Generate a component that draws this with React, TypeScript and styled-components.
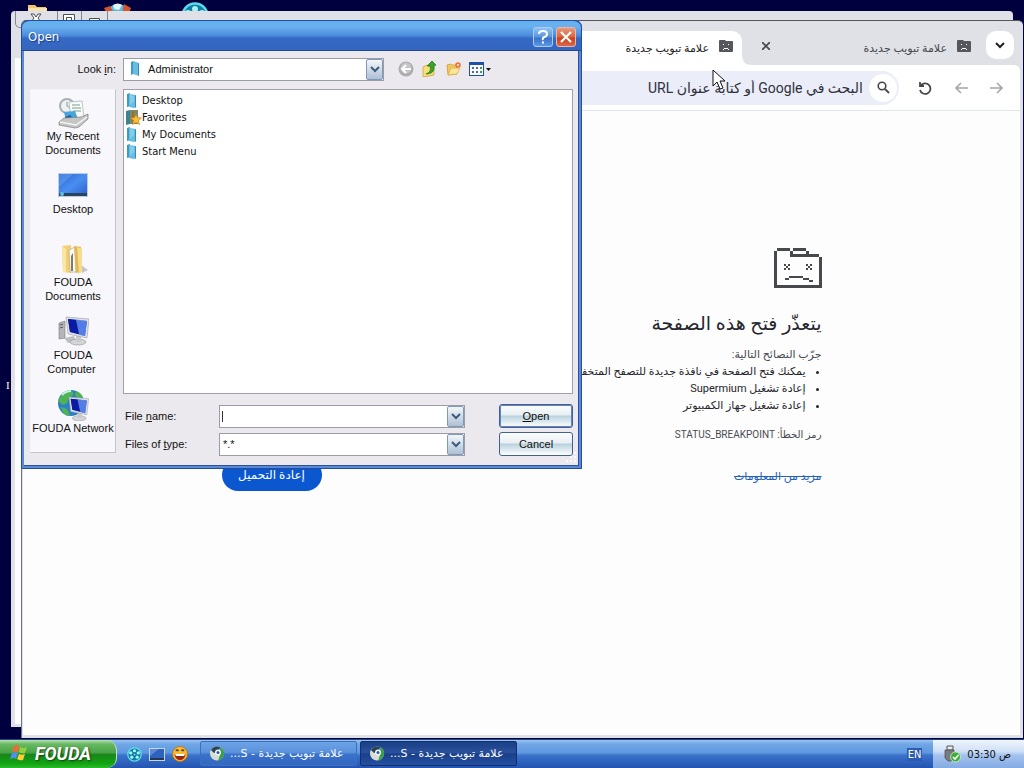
import React from 'react';
import styled, { createGlobalStyle } from 'styled-components';

const tahoma = '"DejaVu Sans Condensed", "DejaVu Sans", sans-serif';
const arabic = 'Roboto, "DejaVu Sans", sans-serif';
const arial = '"Liberation Sans", "DejaVu Sans Condensed", "DejaVu Sans", sans-serif';

const GlobalStyle = createGlobalStyle`
  * { box-sizing: border-box; }
  body { margin: 0; overflow: hidden; font-family: ${arial}; font-size: 11px; color: #111; }
  button, input, select { font: inherit; color: inherit; margin: 0; }
  svg { display: block; flex: none; }
`;

const Screen = styled.div`
  display: flex;
  flex-direction: column;
  height: 100vh;
`;

const Desktop = styled.div`
  position: relative;
  flex: 1;
  min-height: 0;
  background: #00003e;
  overflow: hidden;
`;

const DesktopIcon = styled.div<{ $left: number; $top: number }>`
  position: absolute;
  left: ${p => p.$left}px;
  top: ${p => p.$top}px;
`;

const IconCaption = styled.span`
  position: absolute;
  left: 6px;
  top: 379px;
  color: #fff;
  font-family: "Liberation Serif", serif;
`;

/* Window behind the active one */
const BackWindow = styled.div`
  position: absolute;
  left: 11px;
  top: 11px;
  right: 11px;
  bottom: 12px;
  padding: 0 4px 3px;
  display: flex;
  flex-direction: column;
  background: #dfe1e7;
  border-radius: 4px 4px 0 0;
`;

const CaptionButtons = styled.div`
  display: flex;
  height: 17px;
  width: 93px;
  margin-bottom: 30px;
  border: 1px solid #85868e;
  border-top: 0;
  border-radius: 0 0 5px 5px;
`;

const CaptionButton = styled.button<{ $width: number }>`
  display: flex;
  align-items: flex-start;
  justify-content: center;
  width: ${p => p.$width}px;
  padding: 2px 0 0;
  border: 0;
  border-right: 1px solid #85868e;
  background: none;
  &:last-child { border-right: 0; }
`;

const BackPage = styled.div`
  flex: 1;
  background: #fdfdfe;
`;

/* Browser window */
const Browser = styled.div`
  position: absolute;
  left: 21px;
  top: 20px;
  right: 1px;
  bottom: 1px;
  display: flex;
  flex-direction: column;
  padding: 0 3px 3px 1px;
  background: #dfe1e7;
  border-top: 1px solid #55565e;
  border-left: 1px solid #6d7684;
  border-radius: 5px 5px 0 0;
  font-family: ${arabic};
`;

const TabStrip = styled.div`
  display: flex;
  height: 44px;
  padding: 10px 6px 0 0;
`;

const TabMenu = styled.button`
  display: flex;
  align-items: center;
  justify-content: center;
  width: 28px;
  height: 28px;
  padding: 0;
  border: 0;
  border-radius: 10px;
  background: #fff;
`;

const Tab = styled.div<{ $active?: boolean }>`
  position: relative;
  display: flex;
  align-items: center;
  gap: 10px;
  width: 226px;
  height: 34px;
  padding: 0 9px 5px 0;
  margin-right: ${p => (p.$active ? 12 : 6)}px;
  border-radius: 10px 10px 0 0;
  background: ${p => (p.$active ? '#fff' : 'transparent')};
  color: ${p => (p.$active ? '#222' : '#44474c')};
  font-size: 11px;
`;

const TabFoot = styled.svg`
  position: absolute;
  right: -10px;
  bottom: 0;
`;

const TabTitle = styled.span`
  flex: 1;
  padding-top: 5px;
  white-space: nowrap;
`;

const PlainButton = styled.button`
  display: flex;
  align-items: center;
  justify-content: center;
  width: 24px;
  height: 24px;
  padding: 0;
  border: 0;
  background: none;
`;

const Toolbar = styled.div`
  display: flex;
  align-items: center;
  gap: 12px;
  height: 46px;
  padding: 0 11px 0 8px;
  background: #fff;
  border-radius: 0 6px 0 0;
  border-bottom: 1px solid #e2e5ea;
`;

const Omnibox = styled.label`
  display: flex;
  align-items: center;
  gap: 6px;
  flex: 1;
  height: 34px;
  padding: 0 2px;
  margin-right: 2px;
  border-radius: 17px;
  background: #ebedf8;
`;

const SearchBadge = styled.span`
  display: flex;
  align-items: center;
  justify-content: center;
  width: 28px;
  height: 28px;
  border-radius: 14px;
  background: #fff;
`;

const OmniInput = styled.input`
  flex: 1;
  min-width: 0;
  padding: 0;
  border: 0;
  outline: 0;
  background: none;
  font-size: 14px;
  &::placeholder { color: #30313c; opacity: 1; }
`;

const Page = styled.main`
  flex: 1;
  min-height: 0;
  overflow: hidden;
  background: #fdfdfe;
`;

const ErrorContent = styled.section`
  max-width: 600px;
  margin: 0 auto;
  padding-top: 137px;
  color: #484a50;
  font-size: 11px;
  line-height: 17px;
`;

const ErrorTitle = styled.h1`
  margin: 22px 0 9px;
  color: #25262b;
  font-size: 19px;
  font-weight: 400;
  line-height: 28px;
`;

const Paragraph = styled.p`
  margin: 0;
  line-height: 16px;
`;

const Tips = styled.ul`
  margin: 0 0 12px;
  padding: 0 16px 0 0;
  color: #25262b;
  white-space: nowrap;
`;

const ErrorCode = styled.p`
  margin: 0;
  font-size: 10px;
`;

const ErrorFooter = styled.div`
  display: flex;
  align-items: center;
  justify-content: space-between;
  margin-top: 16px;
`;

const MoreLink = styled.a`
  padding-top: 2px;
  color: #2460bd;
  font-size: 11px;
  text-decoration: line-through;
`;

const ReloadButton = styled.button`
  width: 100px;
  height: 32px;
  padding: 0;
  border: 0;
  border-radius: 16px;
  background: #0b57d0;
  color: #fff;
  font-size: 12px;
`;

/* Open dialog */
const Dialog = styled.div`
  position: absolute;
  left: 21px;
  top: 20px;
  width: 561px;
  border: 3px solid #5b89d5;
  border-top: 0;
  border-radius: 7px 7px 0 0;
  outline: 1px solid #254d9d;
  outline-offset: -1px;
  background: #ebe9ed;
`;

const TitleBar = styled.div`
  display: flex;
  align-items: center;
  gap: 3px;
  height: 31px;
  margin: 0 -2px;
  padding: 2px 5px 0 6px;
  border-top: 1px solid #193c7c;
  border-bottom: 1px solid #1f4a9c;
  border-radius: 7px 7px 0 0;
  background: linear-gradient(#62b1f0, #6bb0ef 20%, #4b8cdb 50%, #3469c4 60%, #3566bf);
`;

const DialogTitle = styled.h2`
  flex: 1;
  margin: 0;
  color: #fff;
  font: 400 13px ${tahoma};
  text-shadow: 1px 1px 1px #1c3f86;
`;

const TitleButton = styled.button<{ $danger?: boolean }>`
  display: flex;
  align-items: center;
  justify-content: center;
  width: 20px;
  height: 20px;
  padding: 0;
  border: 1px solid ${p => (p.$danger ? '#f0b5a8' : '#a9cdf5')};
  border-radius: 3px;
  background: ${p => (p.$danger
    ? 'linear-gradient(#e59a80, #d8653f 50%, #c9401c 55%, #dc6a48)'
    : 'linear-gradient(#8fc1f3, #5c94dd 50%, #3a70c8 55%, #5b98e2)')};
`;

const DialogBody = styled.form`
  display: grid;
  grid-template-columns: 86px 1fr;
  column-gap: 7px;
  row-gap: 8px;
  padding: 6px 5px 9px 6px;
  border: solid #2e5299;
  border-width: 0 1px 1px 0;
`;

const LookLabel = styled.label`
  align-self: center;
  text-align: right;
`;

const LookRow = styled.div`
  display: flex;
  align-items: center;
  height: 24px;
`;

const Combo = styled.div<{ $width: number }>`
  display: flex;
  align-items: center;
  position: relative;
  width: ${p => p.$width}px;
  height: 23px;
  border: 1px solid #9a9ca8;
  background: #fff;
`;

const ComboSelect = styled.select`
  appearance: none;
  flex: 1;
  min-width: 0;
  height: 21px;
  padding: 0 3px;
  border: 0;
  outline: 0;
  background: none;
`;

const ComboInput = styled.input`
  flex: 1;
  min-width: 0;
  height: 21px;
  padding: 0 3px;
  border: 0;
  outline: 0;
  background: none;
`;

const ComboArrow = styled.span`
  display: flex;
  align-items: center;
  justify-content: center;
  width: 17px;
  height: 21px;
  border: 1px solid #8199b8;
  border-radius: 2px;
  background: linear-gradient(#f3f6f9, #d3dfe9 45%, #adc0d4);
  pointer-events: none;
`;

const Caret = styled.span`
  width: 1px;
  height: 11px;
  margin-left: 2px;
  background: #333;
`;

const ToolIcons = styled.div`
  display: flex;
  align-items: center;
  margin-left: 10px;
`;

const Places = styled.nav`
  height: 364px;
  background: #f8f7fb;
  border: 1px solid #f4f3f7;
  border-right-color: #c5c4ca;
  border-bottom-color: #c5c4ca;
`;

const Place = styled.button`
  display: flex;
  flex-direction: column;
  align-items: center;
  width: 100%;
  height: 73px;
  padding: 7px 0 0;
  border: 0;
  background: none;
  line-height: 14px;
  white-space: pre;
`;

const MainColumn = styled.div`
  display: flex;
  flex-direction: column;
  gap: 10px;
`;

const FileList = styled.ul`
  height: 305px;
  margin: 0;
  padding: 2px;
  border: 1px solid #a0a1ab;
  background: #fff;
  list-style: none;
  font-family: ${tahoma};
`;

const FileRow = styled.li`
  display: flex;
  align-items: center;
  height: 17px;
`;

const Fields = styled.div`
  display: grid;
  grid-template-columns: 94px 1fr 74px;
  align-items: center;
  row-gap: 4px;
  padding: 0 0 0 2px;
`;

const DialogButton = styled.button<{ $primary?: boolean }>`
  height: 24px;
  padding: 0;
  border: 1px solid #45608f;
  border-radius: 3px;
  background: linear-gradient(#fbfdfd, #e9eff3 45%, #b9d2dd 50%, #e2edf2 80%, #fff);
  box-shadow: ${p => (p.$primary ? 'inset 0 0 0 1px #6183c6' : 'none')};
`;

const Grip = styled.svg`
  position: absolute;
  right: 2px;
  bottom: 3px;
`;

const Pointer = styled.svg`
  position: absolute;
  left: 712px;
  top: 69px;
`;

/* Taskbar */
const Taskbar = styled.footer`
  display: flex;
  align-items: stretch;
  height: 29px;
  border-top: 1px solid #1e4685;
  background: linear-gradient(#9bc3f0, #70a6e6 15%, #5e98df 45%, #3a72ca 55%, #2454b0);
  color: #fff;
  font-family: ${tahoma};
`;

const StartButton = styled.button`
  display: flex;
  align-items: center;
  gap: 7px;
  width: 117px;
  padding: 0 0 2px 10px;
  border: 0;
  border-right: 1px solid #c0e6bc;
  border-radius: 0 10px 10px 0;
  background: linear-gradient(#b5e0ae, #67b862 15%, #4aa348 45%, #18861a 52%, #12a512 85%, #2bbb2b);
  color: #fff;
  font: italic 700 18px Roboto, "Liberation Sans", sans-serif;
  text-shadow: 1px 1px 2px #143f14;
`;

const QuickLaunch = styled.div`
  display: flex;
  align-items: center;
  gap: 7px;
  width: 83px;
  padding-left: 10px;
`;

const TaskButton = styled.button<{ $active?: boolean }>`
  display: flex;
  align-items: center;
  gap: 5px;
  width: 157px;
  height: 25px;
  margin: 1px 3px 0 0;
  padding: 0 8px 0 9px;
  border: 1px solid ${p => (p.$active ? '#12306f' : '#3b6fc0')};
  border-radius: 2px;
  background: ${p => (p.$active
    ? 'linear-gradient(#1a3f85, #2a519d 45%, #1b3f88 52%, #2350a3)'
    : 'linear-gradient(#6da2e6, #5a92dc 45%, #3a71c9 55%, #3468c2)')};
  font-family: "DejaVu Sans", sans-serif;
  font-size: 11px;
  white-space: nowrap;
`;

const Language = styled.span`
  align-self: center;
  margin: 0 11px 0 auto;
  padding: 0 1px;
  background: #2d5bb0;
`;

const Tray = styled.div`
  display: flex;
  align-items: center;
  gap: 6px;
  padding: 0 13px 0 11px;
  background: linear-gradient(#eef5fd, #cfe0f7 40%, #a3c2ee 55%, #84abe4);
  color: #111;
`;

function Chevron({ color = '#3f5a7c' }: { color?: string }) {
  return (
    <svg width="10" height="8" viewBox="0 0 10 8">
      <path d="M1 2l4 4 4-4" fill="none" stroke={color} strokeWidth="2" />
    </svg>
  );
}

function SadFolder() {
  return (
    <svg width="14" height="12" viewBox="0 0 14 12">
      <path d="M1 0h5l1 1h6q1 0 1 1v9q0 1-1 1H1q-1 0-1-1V1q0-1 1-1z" fill="#55575c" />
      <path d="M4 4h1v1H4zM9 4h1v1H9zM4 9h1V8h4v1h1v1H9V9H5v1H4z" fill="#fff" />
    </svg>
  );
}

function BlueFolder() {
  return (
    <svg width="16" height="16" viewBox="0 0 16 16">
      <path d="M1 1l3-1v13l-3 1z" fill="#3a9bc4" />
      <path d="M3 1l7 1v12l-2 1-5-1z" fill="#67bce0" />
      <path d="M4 2l4 1v5l-4 4z" fill="#9bd8ef" opacity=".6" />
      <path d="M9 3l1-1v12l-1 1z" fill="#2f8dbb" />
    </svg>
  );
}

function FavoritesIcon() {
  return (
    <svg width="16" height="16" viewBox="0 0 16 16">
      <path d="M0 1l4-1v14l-4 1z" fill="#3d8392" />
      <path d="M4 0h8v14H4z" fill="#7a8a6a" />
      <path d="M6 1h2v13H6z" fill="#a9682e" />
      <path d="M10 4l1.500 3.500 4 .5-3 2.500 1 4-3.500-2-3.500 2 1-4-3-2.500 4-.5z" fill="#fbbf35" stroke="#b9770e" strokeWidth=".6" />
    </svg>
  );
}

function RecentIcon() {
  return (
    <svg width="32" height="32" viewBox="0 0 32 32">
      <circle cx="10" cy="9" r="7" fill="#eef2f3" stroke="#a7b0b3" strokeWidth="2" />
      <path d="M10 5v4l3 2" fill="none" stroke="#8a979c" />
      <path d="M12 5l13-1 2 17-13 1z" fill="#fafcfb" stroke="#a3adae" strokeWidth=".7" />
      <path d="M15 8h8M15 11h9M16 14h8" stroke="#7a9a8c" />
      <path d="M7 15l11-1 3 8-12 2z" fill="#47a5dd" />
      <path d="M8 20l5-2 4 4-8 2z" fill="#1f5f98" />
      <path d="M2 25l5-4 17-1 7-3v5l-9 8-4 1-16-3z" fill="#c3c6c3" stroke="#7d807e" strokeWidth=".7" />
      <path d="M3 25l16 3 11-8" fill="none" stroke="#f5f5f5" strokeWidth="1.500" />
    </svg>
  );
}

function DesktopPlaceIcon() {
  return (
    <svg width="32" height="32" viewBox="0 0 32 32">
      <defs>
        <linearGradient id="deskScreen" x1="0" y1="0" x2="1" y2="1">
          <stop offset="0" stopColor="#2b66cf" /><stop offset=".5" stopColor="#4a8ef0" /><stop offset="1" stopColor="#2c5fd0" />
        </linearGradient>
      </defs>
      <path d="M1 3h30v24H1z" fill="#b9cbe5" />
      <path d="M2 4h28v22H2z" fill="url(#deskScreen)" />
      <path d="M2 4h14L2 17z" fill="#86b6f5" opacity=".35" />
      <path d="M2 23h28v3H2z" fill="#27445d" />
      <circle cx="5" cy="24" r="2" fill="#5fc0da" />
    </svg>
  );
}

function DocumentsIcon() {
  return (
    <svg width="32" height="32" viewBox="0 0 32 32">
      <path d="M24 22l7 5-6 3z" fill="#c6c6c8" />
      <path d="M5 3l9-1v28l-8-1z" fill="#f2cf70" />
      <path d="M5 3l4 3v23l-3 0z" fill="#fae6a4" />
      <path d="M12 7l6-3 1 25h-6z" fill="#f7f7f4" stroke="#a29a83" strokeWidth=".6" />
      <path d="M14 13l2-3v18h-2z" fill="#837b6a" />
      <path d="M17 3l7 1 1 25-6 1z" fill="#e4b950" />
      <path d="M20 4l5 2v23l-3 1z" fill="#f7dc8d" />
    </svg>
  );
}

function Monitor({ x = 0, y = 0, scale = 1 }: { x?: number; y?: number; scale?: number }) {
  return (
    <g transform={`translate(${x} ${y}) scale(${scale})`}>
      <ellipse cx="12" cy="25" rx="8" ry="3" fill="#d5d6d8" stroke="#8f9194" strokeWidth=".6" />
      <path d="M10 19h5v6h-5z" fill="#c9cacd" />
      <path d="M0 0l23 2-2 19L2 17z" fill="#dfe1e4" stroke="#9a9ca0" strokeWidth=".6" />
      <path d="M2 2l19 2-2 15L4 15z" fill="#1632c2" />
      <path d="M8 2l13 2-2 15-6-1z" fill="#6c9cf2" opacity=".7" />
      <path d="M2 2l8 1 3 14-9-2z" fill="#0b1aa0" />
    </g>
  );
}

function ComputerIcon() {
  return (
    <svg width="32" height="32" viewBox="0 0 32 32">
      <path d="M2 7l6-2v17l-6 1z" fill="#b3b5b7" stroke="#797b7d" strokeWidth=".6" />
      <path d="M3 9l3-1M3 12l3-1" stroke="#57595b" />
      <path d="M7 22l10-2 2 5-8 2z" fill="#bec0c2" />
      <Monitor x={9} y={1} />
    </svg>
  );
}

function NetworkIcon() {
  return (
    <svg width="32" height="32" viewBox="0 0 32 32">
      <circle cx="14" cy="14" r="13" fill="#2b81c4" />
      <path d="M3 8q5-7 11-7l3 4-5 4-2 5-4 2-5-4zM4 18l6 2 3 6-3 1q-5-3-6-9zM19 2q6 2 7 7l-5 1-3-4z" fill="#51b252" />
      <path d="M5 6q4-4 9-4" stroke="#c6efe6" strokeWidth="2" fill="none" />
      <Monitor x={12} y={8} scale={0.85} />
    </svg>
  );
}

function BrowserMark({ size = 15 }: { size?: number }) {
  return (
    <svg width={size} height={size} viewBox="0 0 15 15">
      <circle cx="7" cy="7.500" r="7" fill="#d9ded4" />
      <path d="M1 4q3-5 9-3l-1 4-5 2z" fill="#2b4154" />
      <path d="M10 1q5 3 4 8-2 5-6 6l2-6z" fill="#3c9d4c" />
      <circle cx="8" cy="6.500" r="3" fill="#eef5fc" /><circle cx="8" cy="6.500" r="1.500" fill="#295ca0" />
    </svg>
  );
}

function ReelIcon({ size }: { size: number }) {
  return (
    <svg width={size} height={size} viewBox="0 0 28 28">
      <circle cx="14" cy="14" r="12.500" fill="#0d7ea3" stroke="#5edbea" strokeWidth="2.500" />
      <g fill="#a9f2f8">
        <circle cx="14" cy="7" r="3" /><circle cx="7" cy="11" r="3" /><circle cx="21" cy="11" r="3" />
        <circle cx="9" cy="19" r="3" /><circle cx="19" cy="19" r="3" /><circle cx="14" cy="14" r="1.500" />
      </g>
    </svg>
  );
}

const places = [
  { label: 'My Recent\nDocuments', icon: <RecentIcon /> },
  { label: 'Desktop', icon: <DesktopPlaceIcon /> },
  { label: 'FOUDA\nDocuments', icon: <DocumentsIcon /> },
  { label: 'FOUDA\nComputer ', icon: <ComputerIcon /> },
  { label: 'FOUDA Network', icon: <NetworkIcon /> },
];

const files = ['Desktop', 'Favorites', 'My Documents', 'Start Menu'];

function BrowserWindow() {
  return (
    <Browser dir="rtl">
      <TabStrip>
        <TabMenu aria-label="Search tabs"><Chevron color="#222" /></TabMenu>
        <Tab>
          <SadFolder />
          <TabTitle>علامة تبويب جديدة</TabTitle>
          <PlainButton aria-label="Close tab">
            <svg width="8" height="8" viewBox="0 0 8 8"><path d="M0 0l8 8M8 0L0 8" stroke="#44464a" strokeWidth="1.600" /></svg>
          </PlainButton>
        </Tab>
        <Tab $active>
          <SadFolder />
          <TabTitle>علامة تبويب جديدة</TabTitle>
          <TabFoot width="10" height="10" viewBox="0 0 10 10"><path d="M0 0q0 10 10 10H0z" fill="#fff" /></TabFoot>
        </Tab>
      </TabStrip>
      <Toolbar>
        <PlainButton aria-label="Back">
          <svg width="14" height="12" viewBox="0 0 14 12"><path d="M0 6h12M7 1l5 5-5 5" fill="none" stroke="#a3a5a8" strokeWidth="1.600" /></svg>
        </PlainButton>
        <PlainButton aria-label="Forward">
          <svg width="14" height="12" viewBox="0 0 14 12"><path d="M14 6H2M7 1L2 6l5 5" fill="none" stroke="#a3a5a8" strokeWidth="1.600" /></svg>
        </PlainButton>
        <PlainButton aria-label="Reload">
          <svg width="14" height="14" viewBox="0 0 14 14"><path d="M2 1v4h4M2.500 5A5.300 5.300 0 1 1 2 9" fill="none" stroke="#45474b" strokeWidth="1.800" /></svg>
        </PlainButton>
        <Omnibox>
          <SearchBadge>
            <svg width="13" height="13" viewBox="0 0 13 13"><circle cx="5" cy="5" r="3.800" fill="none" stroke="#45474b" strokeWidth="1.600" /><path d="M8 8l4 4" stroke="#45474b" strokeWidth="1.800" /></svg>
          </SearchBadge>
          <OmniInput aria-label="العنوان" placeholder="البحث في Google أو كتابة عنوان URL" />
        </Omnibox>
      </Toolbar>
      <Page>
        <ErrorContent>
          <svg width="48" height="40" viewBox="0 0 48 40" shapeRendering="crispEdges">
            <path
              d="M3 0h13v3h3V0h13v3h3v3h10v3h3v31H0V3h3zM3 3v34h42V9H16V3zM19 3v3h13V3z"
              fill="#48494d"
              fillRule="evenodd"
            />
            <path
              d="M10 16h2v2h-2zM14 16h2v2h-2zM12 18h2v2h-2zM10 20h2v2h-2zM14 20h2v2h-2zM32 16h2v2h-2zM36 16h2v2h-2zM34 18h2v2h-2zM32 20h2v2h-2zM36 20h2v2h-2zM15 28h14v2H15zM11 30h4v2h-4zM29 30h6v2h-6zM35 32h4v2h-4z"
              fill="#48494d"
            />
          </svg>
          <ErrorTitle>يتعذّر فتح هذه الصفحة</ErrorTitle>
          <Paragraph>جرّب النصائح التالية:</Paragraph>
          <Tips>
            <li>يمكنك فتح الصفحة في نافذة جديدة للتصفح المتخفي</li>
            <li>إعادة تشغيل Supermium</li>
            <li>إعادة تشغيل جهاز الكمبيوتر</li>
          </Tips>
          <ErrorCode>رمز الخطأ: STATUS_BREAKPOINT</ErrorCode>
          <ErrorFooter>
            <MoreLink href="#info">مزيد من المعلومات</MoreLink>
            <ReloadButton>إعادة التحميل</ReloadButton>
          </ErrorFooter>
        </ErrorContent>
      </Page>
    </Browser>
  );
}

function OpenDialog() {
  return (
    <Dialog role="dialog" aria-labelledby="dialog-title">
      <TitleBar>
        <DialogTitle id="dialog-title">Open</DialogTitle>
        <TitleButton aria-label="Help">
          <svg width="12" height="14" viewBox="0 0 12 14"><path d="M2 4q0-3 4-3t4 3q0 2-2.500 3T6 10M6 11.500v2" fill="none" stroke="#fff" strokeWidth="2" /></svg>
        </TitleButton>
        <TitleButton $danger aria-label="Close">
          <svg width="12" height="12" viewBox="0 0 12 12"><path d="M1 1l10 10M11 1L1 11" stroke="#fff" strokeWidth="2.200" /></svg>
        </TitleButton>
      </TitleBar>
      <DialogBody onSubmit={e => e.preventDefault()}>
        <LookLabel htmlFor="look-in">Look <u>i</u>n:</LookLabel>
        <LookRow>
          <Combo $width={261}>
            <svg width="18" height="16" viewBox="-6 0 18 16"><path d="M1 1l2-1v13l-2 1z" fill="#3a9bc4" /><path d="M3 0l6 2v13l-6-2z" fill="#67bce0" /><path d="M8 3l1-1v13l-1-1z" fill="#2f8dbb" /></svg>
            <ComboSelect id="look-in" defaultValue="a"><option value="a">&nbsp;Administrator</option></ComboSelect>
            <ComboArrow><Chevron /></ComboArrow>
          </Combo>
          <ToolIcons>
            <PlainButton type="button" aria-label="Go back">
              <svg width="16" height="16" viewBox="0 0 16 16"><circle cx="8" cy="8" r="7.500" fill="#acacae" /><circle cx="8" cy="7" r="5.500" fill="#c5c5c7" /><path d="M4 8h9M8 4L4 8l4 4" fill="none" stroke="#fff" strokeWidth="2" /></svg>
            </PlainButton>
            <PlainButton type="button" aria-label="Up one level">
              <svg width="16" height="16" viewBox="0 0 16 16"><path d="M1 6l4-2 1 1h6v9l-11 2z" fill="#f8df7c" stroke="#d2a23a" strokeWidth=".8" /><path d="M4 13q6-2 4-8H5l5-5 4 4-2 1q1 8-8 8z" fill="#37a32b" stroke="#1b7415" strokeWidth=".7" /></svg>
            </PlainButton>
            <PlainButton type="button" aria-label="New folder">
              <svg width="16" height="16" viewBox="0 0 16 16"><path d="M1 4l4-1 1 1h5v9l-9 1z" fill="#f0c95c" stroke="#cf9a30" strokeWidth=".8" /><path d="M2 14l3-7h9l-3 6z" fill="#fbe69b" stroke="#dba63d" strokeWidth=".7" /><circle cx="12" cy="4" r="2" fill="#fde3b0" stroke="#ee6a3a" strokeWidth="1.500" /></svg>
            </PlainButton>
            <PlainButton type="button" aria-label="View menu">
              <svg width="22" height="14" viewBox="-6 0 22 14" overflow="visible"><path d="M-4 0h15v14H-4z" fill="#1b50a5" /><path d="M-3 3h13v10H-3z" fill="#f7faff" /><path d="M-1 5h2v2h-2zM3 9h2v2H3z" fill="#376fc2" /><path d="M3 5h2v2H3zM-1 9h2v2h-2z" fill="#7a5b77" /><path d="M7 5h2v2H7zM7 9h2v2H7z" fill="#3a9a55" /><path d="M13 6h5l-2.500 3z" fill="#111" /></svg>
            </PlainButton>
          </ToolIcons>
        </LookRow>
        <Places>
          {places.map(p => <Place type="button" key={p.label}>{p.icon}{p.label}</Place>)}
        </Places>
        <MainColumn>
          <FileList>
            {files.map(f => <FileRow key={f}>{f === 'Favorites' ? <FavoritesIcon /> : <BlueFolder />}{f}</FileRow>)}
          </FileList>
          <Fields>
            <label htmlFor="file-name">File <u>n</u>ame:</label>
            <Combo $width={246}>
              <Caret />
              <ComboInput id="file-name" />
              <ComboArrow><Chevron /></ComboArrow>
            </Combo>
            <DialogButton $primary><u>O</u>pen</DialogButton>
            <label htmlFor="file-type">Files of <u>t</u>ype:</label>
            <Combo $width={246}>
              <ComboSelect id="file-type"><option>*.*</option></ComboSelect>
              <ComboArrow><Chevron /></ComboArrow>
            </Combo>
            <DialogButton type="button">Cancel</DialogButton>
          </Fields>
        </MainColumn>
      </DialogBody>
      <Grip width="12" height="12" viewBox="0 0 12 12"><path d="M9 1h2v2H9zM5 5h2v2H5zM9 5h2v2H9zM1 9h2v2H1zM5 9h2v2H5zM9 9h2v2H9z" fill="#fafafc" /></Grip>
    </Dialog>
  );
}

export default function App() {
  return (
    <Screen>
      <GlobalStyle />
      <Desktop>
        <DesktopIcon $left={26} $top={4}>
          <svg width="22" height="20" viewBox="0 0 22 20"><path d="M2 1h7l2 2h9v17H2z" fill="#f3c374" /><path d="M2 4h19v16H2z" fill="#fbe2ae" /></svg>
        </DesktopIcon>
        <DesktopIcon $left={104} $top={2}>
          <svg width="28" height="28" viewBox="0 0 28 28"><circle cx="14" cy="14" r="12" fill="#58bce0" /><path d="M0 6l6-2 4 7-6 3zM20 2l7 4-3 8-6-3z" fill="#d5542b" /><path d="M9 3q5-3 9 0l-3 5-5-1z" fill="#e5f5f3" /></svg>
        </DesktopIcon>
        <DesktopIcon $left={181} $top={2}><ReelIcon size={28} /></DesktopIcon>
        <IconCaption>I</IconCaption>
        <BackWindow>
          <CaptionButtons>
            <CaptionButton $width={42} aria-label="Close">
              <svg width="12" height="10" viewBox="0 0 12 10"><path d="M1 1h3l2 3 2-3h3L8 5l3 4H8L6 7 4 9H1l3-4z" fill="#fff" stroke="#4b4c54" /></svg>
            </CaptionButton>
            <CaptionButton $width={25} aria-label="Restore">
              <svg width="12" height="12" viewBox="0 0 12 12"><path d="M.5 1.500h11v10H.5zM3.500 4.500h5v5h-5z" fill="#fff" stroke="#4b4c54" /></svg>
            </CaptionButton>
            <CaptionButton $width={25} aria-label="Minimize">
              <svg width="11" height="12" viewBox="0 0 11 12"><path d="M.5 5.500h10v3H.5z" fill="#fff" stroke="#4b4c54" /></svg>
            </CaptionButton>
          </CaptionButtons>
          <BackPage />
        </BackWindow>
        <BrowserWindow />
        <OpenDialog />
        <Pointer width="14" height="22" viewBox="0 0 14 22"><path d="M1 1v16l4-4 3 7 3-1-3-7h5z" fill="#fff" stroke="#111" /></Pointer>
      </Desktop>
      <Taskbar>
        <StartButton>
          <svg width="18" height="18" viewBox="0 0 18 18">
            <path d="M4 2q3-2 5 0L8 8q-3-1-6 0z" fill="#f06a33" /><path d="M10 3q3 2 7 0l-2 6q-3 1-6-1z" fill="#8fd13f" />
            <path d="M2 9q3-1 6 0l-2 6q-2-2-6 0z" fill="#4f8ff0" /><path d="M9 10q3 1 6 0l-2 6q-3 1-6-1z" fill="#fbd03a" />
          </svg>
          FOUDA
        </StartButton>
        <QuickLaunch>
          <ReelIcon size={15} />
          <svg width="16" height="13" viewBox="0 0 16 13"><path d="M0 0h16v13H0z" fill="#c0d6f3" /><path d="M1 1h14v10H1z" fill="#2e62be" /><path d="M1 1h9l-9 7z" fill="#87b0ea" opacity=".5" /><path d="M1 10h14v2H1z" fill="#26364b" /></svg>
          <svg width="16" height="16" viewBox="0 0 16 16"><circle cx="8" cy="8" r="7.500" fill="#f9ba2e" stroke="#c46d12" strokeWidth=".8" /><path d="M2.500 8h11q-1 6-5.500 6T2.500 8z" fill="#9c2414" /><path d="M3 8h10l-1 2H4z" fill="#fff" /><path d="M4 5q1-2 2.500 0M9.500 5q1-2 2.500 0" stroke="#442" fill="none" strokeWidth="1.300" /></svg>
        </QuickLaunch>
        <TaskButton><BrowserMark /><span dir="rtl">علامة تبويب جديدة - S...</span></TaskButton>
        <TaskButton $active><BrowserMark /><span dir="rtl">علامة تبويب جديدة - S...</span></TaskButton>
        <Language>EN</Language>
        <Tray>
          <svg width="17" height="18" viewBox="0 0 17 18"><path d="M3 1h6v4H3z" fill="#e8e8ea" stroke="#555" /><path d="M1 5h9v8l-3 3H4l-3-3z" fill="#777a7e" stroke="#494b4e" strokeWidth=".7" /><circle cx="11.500" cy="12" r="5" fill="#3fae38" stroke="#e9f7e8" strokeWidth=".7" /><path d="M9 12l2 2 3.500-4" stroke="#fff" strokeWidth="1.600" fill="none" /></svg>
          <span>03:30 ص</span>
        </Tray>
      </Taskbar>
    </Screen>
  );
}
